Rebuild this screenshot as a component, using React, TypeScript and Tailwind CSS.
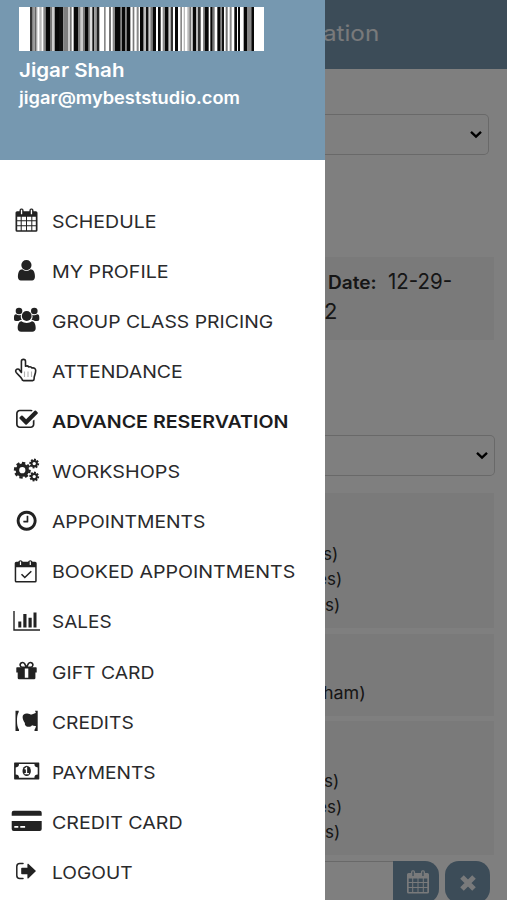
import type { ReactNode } from 'react';
import clsx from 'clsx';

// [start, width, colour], in thirds of a pixel
const bars: [number, number, string][] = [
  [90, 8, '#333'], [98, 6, '#999'], [104, 6, '#666'], [110, 3, '#ccc'], [118, 7, '#bbb'], [130, 7, '#888'],
  [137, 13, '#080808'], [150, 7, '#777'], [157, 7, '#ccc'], [164, 13, '#080808'], [177, 13, '#111'],
  [190, 14, '#808080'], [204, 6, '#ccc'], [210, 5, '#777'], [221, 13, '#080808'], [234, 8, '#808080'],
  [242, 7, '#ccc'], [249, 6, '#777'], [255, 11, '#080808'], [266, 5, '#888'], [271, 6, '#ddd'], [277, 6, '#111'],
  [283, 7, '#999'], [290, 8, '#222'], [312, 5, '#888'], [328, 4, '#333'], [338, 7, '#888'],
  [345, 17, '#080808'], [362, 4, '#888'], [366, 9, '#080808'], [375, 5, '#888'], [380, 11, '#080808'],
  [398, 5, '#777'], [410, 6, '#888'], [420, 11, '#080808'], [431, 7, '#bbb'], [438, 8, '#111'],
  [446, 5, '#ccc'], [451, 7, '#777'], [458, 10, '#080808'], [474, 8, '#080808'], [488, 7, '#888'],
  [495, 11, '#080808'], [506, 6, '#ccc'], [512, 7, '#333'], [525, 9, '#080808'], [541, 5, '#888'],
  [551, 4, '#bbb'], [562, 6, '#bbb'], [568, 6, '#777'], [578, 11, '#080808'], [589, 5, '#bbb'],
  [594, 8, '#333'], [609, 5, '#888'], [614, 12, '#080808'], [631, 7, '#080808'], [639, 5, '#777'],
  [652, 10, '#080808'], [662, 4, '#888'], [666, 6, '#111'], [677, 6, '#777'], [689, 6, '#888'],
  [703, 8, '#080808'], [714, 6, '#080808'], [731, 10, '#080808'], [741, 13, '#888'], [754, 8, '#080808'],
];

function Calendar() {
  return (
    <path
      fillRule="evenodd"
      d="M1.6 3H4V2.2A1.9 1.9 0 0 1 5.7.3h.7A1.9 1.9 0 0 1 8.1 2.2V3h5.8V2.2A1.9 1.9 0 0 1 15.6.3h.7A1.9 1.9 0 0 1 18 2.2V3h2.4A1.6 1.6 0 0 1 22 4.6V22a1.6 1.6 0 0 1-1.6 1.6H1.6A1.6 1.6 0 0 1 0 22V4.6A1.6 1.6 0 0 1 1.6 3zM1.7 8.5V12h3.5V8.5zM6.2 8.5V12h4.3V8.5zM11.5 8.5V12h4.3V8.5zM16.8 8.5V12h3.5V8.5zM1.7 13V17h3.5V13zM6.2 13V17h4.3V13zM11.5 13V17h4.3V13zM16.8 13V17h3.5V13zM1.7 18V22h3.5V18zM6.2 18V22h4.3V18zM11.5 18V22h4.3V18zM16.8 18V22h3.5V18zM5.4 1.6V6h1.3V1.6zM15.3 1.6V6h1.3V1.6z"
    />
  );
}

function Gear({ x, y, r, body, tooth }: { x: number; y: number; r: number; body: number; tooth: number }) {
  return (
    <g transform={`translate(${x} ${y})`}>
      {[0, 45, 90, 135].map((a) => (
        <g key={a} transform={`rotate(${a + 10})`}>
          <rect x={-tooth / 2} y={-r} width={tooth} height={r - body + 0.5} />
          <rect x={-tooth / 2} y={body - 0.5} width={tooth} height={r - body + 0.5} />
        </g>
      ))}
      <circle r={body * 0.74} fill="none" stroke="currentColor" strokeWidth={body * 0.54} />
    </g>
  );
}

const items: { label: string; fit: string; active?: boolean; icon: ReactNode }[] = [
  { label: 'SCHEDULE', fit: 'scale-x-[1.11]', icon: <g transform="translate(5.5 1.2)"><Calendar /></g> },
  {
    label: 'MY PROFILE',
    fit: 'scale-x-[1.117]',
    icon: (
      <path transform="translate(4.5 1.3) scale(.0133)" d="M1536 1399q0 109-62.5 187t-150.5 78h-854q-88 0-150.5-78t-62.5-187q0-85 8.5-160.5t31.5-152 58.5-131 94-89 134.5-34.5q131 128 313 128t313-128q76 0 134.5 34.5t94 89 58.5 131 31.5 152 8.5 160.5zm-256-887q0 159-112.5 271.5t-271.5 112.5-271.5-112.5-112.5-271.5 112.5-271.5 271.5-112.5 271.5 112.5 112.5 271.5z" />
    ),
  },
  {
    label: 'GROUP CLASS PRICING',
    fit: 'scale-x-[1.101]',
    icon: (
      <>
        <circle cx="9" cy="4" r="3.3" />
        <circle cx="24.3" cy="4" r="3.3" />
        <path d="M4 10.5c0-2 .7-3.2 2-3.2 2.2 1.3 3.7 1.2 5 .4-.6 2.3 0 4 .8 5.2-1.600 0-2.600.4-3.500 1.200H6c-1.500 0-2-.8-2-2zM29.300 10.500c0-2-.7-3.200-2-3.200-2.200 1.300-3.700 1.200-5 .4.6 2.300 0 4-.8 5.200 1.600 0 2.600.4 3.500 1.200h2.300c1.500 0 2-.8 2-2z" />
        <circle cx="16.7" cy="9" r="4.9" />
        <path d="M11.5 14.300c3 2.300 7.400 2.300 10.400 0 2.700.3 3.800 3.200 3.800 7 0 2.200-1.400 3.500-3.400 3.500H11.100c-2 0-3.400-1.300-3.400-3.500 0-3.800 1.100-6.700 3.800-7z" />
      </>
    ),
  },
  {
    label: 'ATTENDANCE',
    fit: 'scale-x-[1.107]',
    icon: (
      <>
        <path fill="none" stroke="currentColor" strokeWidth="1.6" strokeLinejoin="round" d="M11.4 15.5V4.4a2 2 0 0 1 4.1 0V9.3c1.2-.6 2.6-.3 3.3.7 1.3-.5 2.6-.1 3.2 1 2.2-.5 3.7.6 3.7 2.6 0 3.3-1.6 5-1.6 7.5v1c0 .9-.6 1.5-1.5 1.5H13.5c-.9 0-1.500-.6-1.500-1.500-1.500-2.700-4-4.400-5.800-6.600-1.500-2 .4-4.200 2.700-3.300z" />
        <path fill="none" stroke="currentColor" strokeOpacity=".35" strokeWidth="1.1" d="M14.5 14.5V20M18 14.5V20M21.5 14.5V20" />
      </>
    ),
  },
  {
    label: 'ADVANCE RESERVATION',
    fit: 'scale-x-[1.115]',
    active: true,
    icon: (
      <path transform="translate(5.2 1) scale(.0131)" d="M1472 930v318q0 119-84.5 203.5t-203.5 84.5h-832q-119 0-203.5-84.5t-84.5-203.5v-832q0-119 84.5-203.5t203.5-84.5h832q63 0 117 25 15 7 18 23 3 17-9 29l-49 49q-10 10-23 10-3 0-9-2-23-6-45-6h-832q-66 0-113 47t-47 113v832q0 66 47 113t113 47h832q66 0 113-47t47-113v-254q0-13 9-22l64-64q10-10 23-10 6 0 12 3 20 8 20 29zm231-489l-814 814q-24 24-57 24t-57-24l-430-430q-24-24-24-57t24-57l110-110q24-24 57-24t57 24l263 263 647-647q24-24 57-24t57 24l110 110q24 24 24 57t-24 57z" />
    ),
  },
  {
    label: 'WORKSHOPS',
    fit: 'scale-x-[1.123]',
    icon: (
      <>
        <Gear x={12.3} y={13.2} r={8.4} body={6.6} tooth={3.4} />
        <Gear x={24.2} y={6.6} r={4.9} body={3.6} tooth={2} />
        <Gear x={24.2} y={19.6} r={4.9} body={3.6} tooth={2} />
      </>
    ),
  },
  {
    label: 'APPOINTMENTS',
    fit: 'scale-x-[1.098]',
    icon: (
      <path transform="translate(5 1.1) scale(.013)" d="M1024 544v448q0 14-9 23t-23 9h-320q-14 0-23-9t-9-23v-64q0-14 9-23t23-9h224v-352q0-14 9-23t23-9h64q14 0 23 9t9 23zm416 352q0-148-73-273t-198-198-273-73-273 73-198 198-73 273 73 273 198 198 273 73 273-73 198-198 73-273zm224 0q0 209-103 385.5t-279.5 279.5-385.5 103-385.5-103-279.5-279.5-103-385.5 103-385.5 279.5-279.5 385.5-103 385.5 103 279.5 279.5 103 385.5z" />
    ),
  },
  {
    label: 'BOOKED APPOINTMENTS',
    fit: 'scale-x-[1.115]',
    icon: (
      <>
        <path fillRule="evenodd" d="M6.3 3.7H8.2a2.5 2.5 0 0 1 4.6 0h5.2a2.5 2.5 0 0 1 4.6 0h2.5a1.6 1.6 0 0 1 1.6 1.6V23a1.6 1.6 0 0 1-1.6 1.6H6.3A1.6 1.6 0 0 1 4.7 23V5.3a1.6 1.6 0 0 1 1.6-1.6zM6.2 9.2V23.1H25.2V9.200zM9.900 3.500V7h1.200V3.500zM19.700 3.500V7h1.200V3.500z" />
        <path fill="none" stroke="currentColor" strokeWidth="1.6" d="M11.5 16.3l3.3 3.2 6.500-6.300" />
      </>
    ),
  },
  {
    label: 'SALES',
    fit: 'scale-x-[1.08]',
    icon: <path d="M3.3 3h1.4v18.3H30v1.5H3.3zM8.3 13.4h3v6h-3zM13.3 6h3.2v13.400h-3.200zM18.500 9.700h3.200v9.700h-3.200zM23.500 4.400h3v15h-3z" />,
  },
  {
    label: 'GIFT CARD',
    fit: 'scale-x-[1.1]',
    icon: (
      <>
        <path fill="none" stroke="currentColor" strokeWidth="1.6" d="M16.5 9.3 14.6 5.7a2.4 2.4 0 1 0-2 3.6zM16.5 9.3 18.4 5.7a2.4 2.4 0 1 1 2 3.6z" />
        <path fillRule="evenodd" d="M7 9.3h19a.7.7 0 0 1 .7.7v4.500H25.400V20a1.300 1.300 0 0 1-1.300 1.300H9A1.300 1.300 0 0 1 7.700 20V14.500H6.300V10a.7.7 0 0 1 .7-.7zM14.800 10.500v9.300h3.500v-9.300z" />
      </>
    ),
  },
  {
    label: 'CREDITS',
    fit: 'scale-x-[1.093]',
    icon: (
      <path d="M5.5 2.7H8.700V4C7.300 6.500 7 9.500 7 12.700s.4 6.500 2 9v1.200H5.500zM25 2.700h2.700v20.200H24.500V21.700c.8-1 1.300-2.200 1.500-3.700-1.500.2-2.900-.2-4-.8-.8 1.300-2.600 2-4.500 1.500-2-.5-3-2-2.600-3.700-1.200-1.700-2.200-3.500-2.300-6 0-2.600 2-3.800 4.700-3.600 2 .2 3 1.200 4.600 1 1.500-.2 2.400-1.300 4-1.400z" />
    ),
  },
  {
    label: 'PAYMENTS',
    fit: 'scale-x-[1.09]',
    icon: (
      <>
        <path fillRule="evenodd" d="M4.7 4.4h24a.6.6 0 0 1 .6.6v15.8a.6.6 0 0 1-.6.6h-24a.6.6 0 0 1-.6-.6V5a.6.6 0 0 1 .6-.6zM9 6.1A3.3 3.3 0 0 1 5.7 9.400v7A3.300 3.300 0 0 1 9 19.700h15.400a3.300 3.300 0 0 1 3.300-3.300v-7a3.300 3.300 0 0 1-3.300-3.300z" />
        <ellipse cx="16.7" cy="12.9" rx="4.2" ry="5.2" />
        <path fill="none" stroke="#fff" strokeWidth="1.3" d="M14.7 11.300l1.800-1.500v5.800M14.500 15.700h4.400" />
      </>
    ),
  },
  {
    label: 'CREDIT CARD',
    fit: 'scale-x-[1.115]',
    icon: <path fillRule="evenodd" d="M3.7 2.7h26a2 2 0 0 1 2 2V7.800h-30V4.700a2 2 0 0 1 2-2zM1.700 13h30v8a2 2 0 0 1-2 2h-26a2 2 0 0 1-2-2zM4.300 18v1.700h4V18zM10.300 18v1.700h4.800V18z" />,
  },
  {
    label: 'LOGOUT',
    fit: 'scale-x-[1.09]',
    icon: (
      <>
        <path fill="none" stroke="currentColor" strokeWidth="1.5" strokeLinecap="round" d="M13 5.500H9.800A3 3 0 0 0 6.800 8.500v9a3 3 0 0 0 3 3H13" />
        <path d="M18.300 5.800 26 13l-7.700 7.400q-.9.500-.9-.7v-3.500h-5.500q-.7 0-.7-.7v-5q0-.7.7-.7h5.500V6.500q0-1.200.9-.7z" />
      </>
    ),
  },
];

function Select({ className }: { className: string }) {
  return (
    <div className={clsx('flex h-[41px] items-center justify-end rounded-r-[5px] border border-l-0 border-[#d2d2d2] pr-1.5', className)}>
      <svg width="12" height="9" viewBox="0 0 12 9" fill="none" stroke="#000" strokeWidth="2.4">
        <path d="M1 1.800l5 4.700 5-4.700" />
      </svg>
    </div>
  );
}

function Line({ className = '-ml-0.5', children }: { className?: string; children: string }) {
  return <p className={clsx('h-[25.7px] whitespace-nowrap leading-[25.7px]', className)}>{children}</p>;
}

function Drawer() {
  return (
    <aside className="relative z-10 flex h-[900px] w-[325px] shrink-0 flex-col bg-white">
      <div className="h-[159.5px] bg-[#7698b0] pt-[7px] pl-[19px] font-semibold text-white">
        <svg width="245" height="44" viewBox="57 0 735 132" className="block">
          <rect x="57" width="735" height="132" fill="#fff" />
          {bars.map(([x, w, fill]) => (
            <rect key={x} x={x} width={w} height="132" fill={fill} />
          ))}
        </svg>
        <p className="mt-1.5 w-max origin-left scale-x-[1.08] text-[19px] leading-7">Jigar Shah</p>
        <p className="w-max origin-left scale-x-[1.072] text-[17px] leading-[27px]">jigar@mybeststudio.com</p>
      </div>
      <nav className="flex flex-col pt-[37.5px] pl-2.5 text-[#2a2a2c]">
        {items.map(({ label, fit, active, icon }) => (
          <a key={label} href="#" className="flex h-[50.08px] items-center gap-1.5">
            <svg width="36" height="30" viewBox="0 0 36 30" fill="currentColor" className="shrink-0 overflow-visible text-[#222]">
              {icon}
            </svg>
            <span className={clsx('w-max origin-left whitespace-nowrap text-[17.6px]', fit, active && 'font-semibold text-[#1c1c1e]')}>
              {label}
            </span>
          </a>
        ))}
      </nav>
    </aside>
  );
}

function Page() {
  return (
    <main className="relative flex h-[900px] w-[182px] flex-col overflow-hidden bg-white text-[17px] text-[#2c2c2c]">
      <header className="h-[69px] shrink-0 bg-[#7898b0] pt-[18px] text-[22px] leading-[30px] text-white/90">
        <p className="-ml-0.5 w-max origin-left scale-x-[1.1]">ation</p>
      </header>
      <Select className="mt-[44.5px] mr-[18.5px] shrink-0" />
      <section className="mt-[102px] mr-[13px] h-[83px] shrink-0 bg-[#f4f4f4] pt-[9px] text-[22px] leading-[30px]">
        <p className="flex h-[30px] items-baseline pl-[3px]">
          <span className="w-[60px] text-[18px] font-semibold">
            <span className="inline-block origin-left scale-x-[1.06]">Date:</span>
          </span>
          <span className="inline-block origin-left scale-x-[.93] whitespace-nowrap">12-29-</span>
        </p>
        <p className="-ml-px">2</p>
      </section>
      <Select className="mt-[95px] mr-[12.5px] shrink-0" />
      <section className="mt-[17.5px] mr-[13px] h-[135px] shrink-0 bg-[#f4f4f4] pt-[48.5px]">
        <Line>s)</Line>
        <Line className="-ml-2">es)</Line>
        <Line className="-ml-2.5">es)</Line>
      </section>
      <section className="mt-1.5 mr-[13px] h-[82px] shrink-0 bg-[#f4f4f4] pt-[47px]">
        <Line className="-ml-0.5 w-max origin-left scale-x-[1.05]">ham)</Line>
      </section>
      <section className="mt-[5px] mr-[13px] h-[134px] shrink-0 bg-[#f4f4f4] pt-[48px]">
        <Line className="-ml-px">s)</Line>
        <Line className="-ml-2">es)</Line>
        <Line className="-ml-2.5">es)</Line>
      </section>
      <div className="mt-1.5 flex h-[42px] shrink-0 text-white/90">
        <div className="w-[68px] border-t border-[#d2d2d2]" />
        <button className="flex w-[46px] items-center justify-center rounded-r-[14px] bg-[#7898b0] pl-[3px]">
          <svg width="22" height="24" viewBox="0 0 22 24" fill="currentColor">
            <Calendar />
          </svg>
        </button>
        <button className="ml-1.5 flex w-[45px] items-center justify-center rounded-[14px] bg-[#7898b0] pt-0.5">
          <svg width="16" height="16" viewBox="0 0 16 16" stroke="currentColor" strokeWidth="5">
            <path d="M2 2l12 12M14 2L2 14" fill="none" />
          </svg>
        </button>
      </div>
      <div className="absolute inset-0 bg-black/50" />
    </main>
  );
}

export default function App() {
  return (
    <div className="flex h-[900px] w-[507px] overflow-hidden font-['Inter',sans-serif]">
      <Drawer />
      <Page />
    </div>
  );
}
